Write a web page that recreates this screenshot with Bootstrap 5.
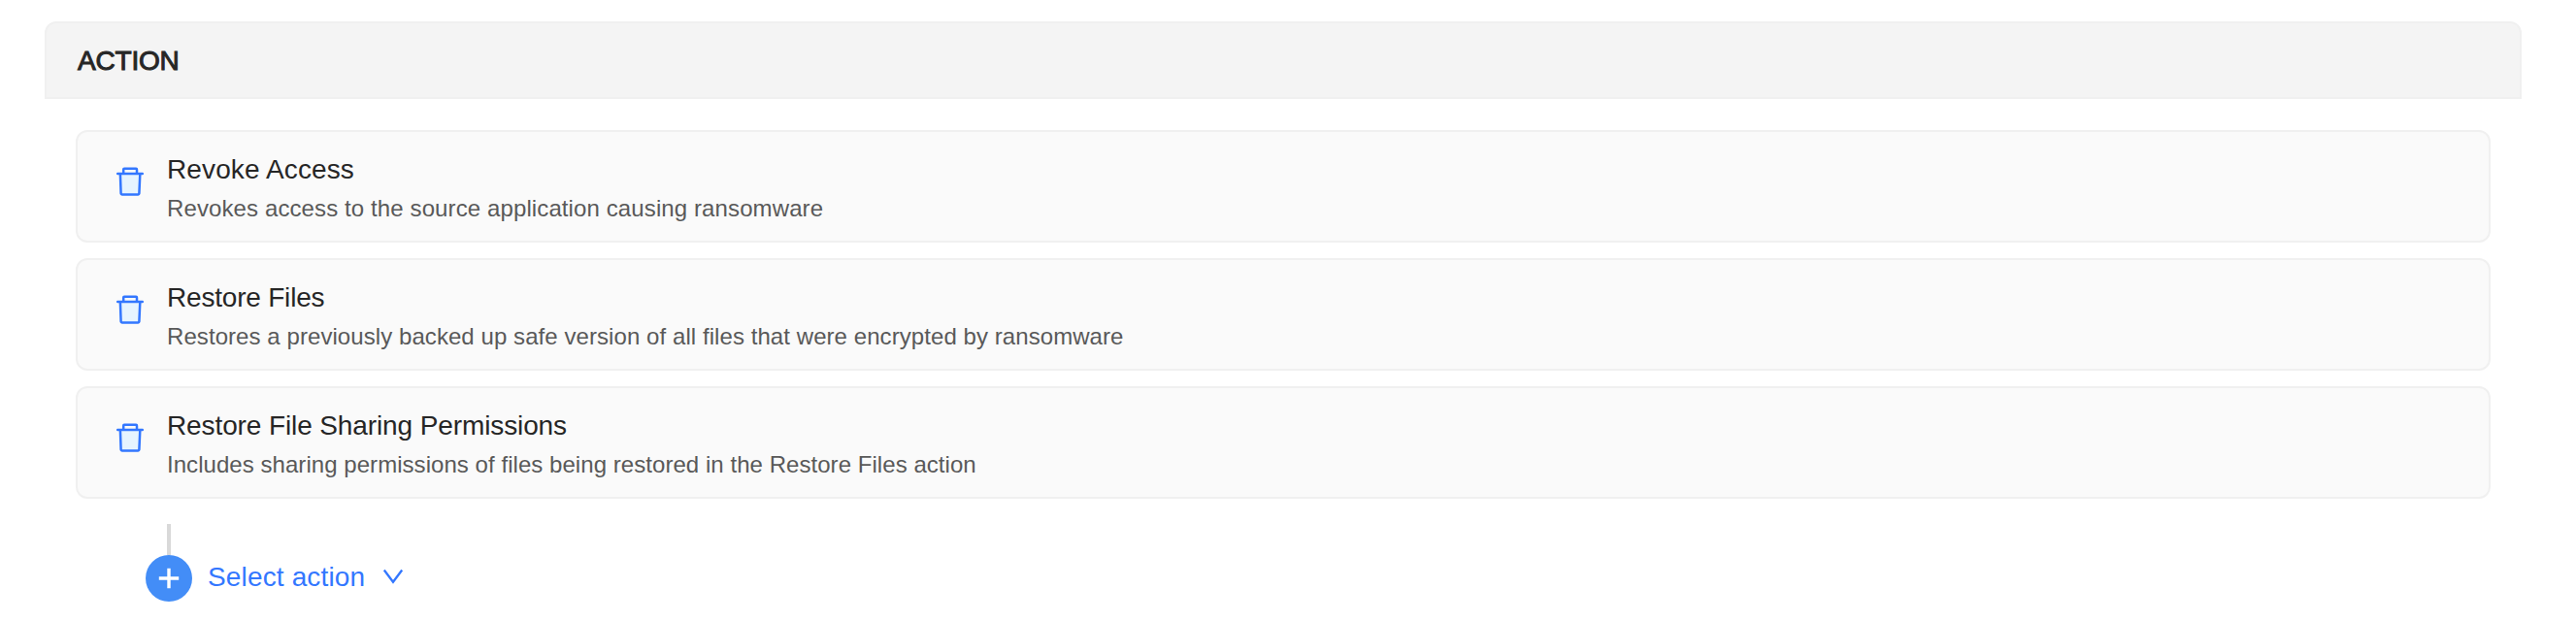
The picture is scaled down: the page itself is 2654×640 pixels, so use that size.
<!DOCTYPE html>
<html lang="en">
<head>
  <meta charset="utf-8">
  <title>Policy Actions</title>
  <link rel="stylesheet" href="https://cdn.jsdelivr.net/npm/bootstrap@5.3.0/dist/css/bootstrap.min.css">
  <style>
    body {
      font-family: "Liberation Sans", Arial, sans-serif;
      color: #262626;
      font-size: 28px;
      line-height: 44px;
    }
    .action-panel { padding: 22px 56px 0 46px; }
    .action-header {
      height: 80px;
      padding: 2px 32px 0;
      background: #f4f4f4;
      border: 2px solid #f0f0f0;
      border-radius: 12px 12px 0 0;
    }
    .action-header h2 {
      font-size: 28px;
      line-height: 44px;
      font-weight: 400;
      letter-spacing: -0.2px;
      -webkit-text-stroke: 1px #262626;
    }
    .action-body { padding: 32px; }
    .action-list { gap: 16px; }
    .action-item {
      height: 116px;
      padding: 17px 38px 0;
      gap: 22px;
      background: #fafafa;
      border: 2px solid #f0f0f0;
      border-radius: 12px;
    }
    .btn-trash { margin-top: 17px; }
    .action-title { font-size: 28px; line-height: 44px; }
    .action-text { font-size: 24px; line-height: 36px; color: #595959; }
    .action-item:nth-child(1) .action-title { letter-spacing: 0.12px; }
    .action-item:nth-child(2) .action-title { letter-spacing: -0.2px; }
    .action-item:nth-child(3) .action-title { letter-spacing: -0.11px; }
    .action-item:nth-child(1) .action-text { letter-spacing: 0.11px; }
    .action-item:nth-child(2) .action-text { letter-spacing: 0.07px; }
    .action-item:nth-child(3) .action-text { letter-spacing: 0.05px; }
    .add-action { padding: 26px 0 0 72px; }
    .add-line { width: 4px; height: 32px; margin-left: 22px; background: #d9d9d9; }
    .add-circle { width: 48px; height: 48px; background: #438df7; }
    .btn-select {
      padding: 0 0 2px;
      margin-left: 16px;
      gap: 18px;
      font-size: 28px;
      line-height: 44px;
      letter-spacing: 0.15px;
      color: #3377ff;
    }
    .btn-select svg { margin-bottom: 2px; }
  </style>
  <script src="https://cdn.jsdelivr.net/npm/bootstrap@5.3.0/dist/js/bootstrap.bundle.min.js"></script>
</head>
<body class="bg-white overflow-hidden">
  <svg class="d-none">
    <symbol id="trash" viewBox="0 0 32 32">
      <path d="M6 9H26L25.4 30.5H7Z" fill="#e6f4ff"/>
      <path d="M3.2 9H28.8M9.2 8.6V4.7Q9.2 3.8 10.1 3.8H22.1Q23 3.8 23 4.7V8.6M5.9 9.4L6.6 29.4Q6.7 30.4 7.7 30.4H24.3Q25.3 30.4 25.4 29.4L26.3 9.4" fill="none" stroke="#3377ff" stroke-width="2.5" stroke-linecap="round"/>
    </symbol>
  </svg>

  <div class="action-panel">
    <div class="action-header d-flex align-items-center">
      <h2 class="mb-0">ACTION</h2>
    </div>
    <div class="action-body">
      <div class="action-list d-flex flex-column">
        <div class="action-item d-flex align-items-start">
          <button type="button" class="btn-trash btn p-0 border-0 d-flex" aria-label="Delete"><svg width="32" height="32"><use href="#trash"/></svg></button>
          <div>
            <div class="action-title">Revoke Access</div>
            <div class="action-text">Revokes access to the source application causing ransomware</div>
          </div>
        </div>
        <div class="action-item d-flex align-items-start">
          <button type="button" class="btn-trash btn p-0 border-0 d-flex" aria-label="Delete"><svg width="32" height="32"><use href="#trash"/></svg></button>
          <div>
            <div class="action-title">Restore Files</div>
            <div class="action-text">Restores a previously backed up safe version of all files that were encrypted by ransomware</div>
          </div>
        </div>
        <div class="action-item d-flex align-items-start">
          <button type="button" class="btn-trash btn p-0 border-0 d-flex" aria-label="Delete"><svg width="32" height="32"><use href="#trash"/></svg></button>
          <div>
            <div class="action-title">Restore File Sharing Permissions</div>
            <div class="action-text">Includes sharing permissions of files being restored in the Restore Files action</div>
          </div>
        </div>
      </div>

      <div class="add-action">
        <div class="add-line"></div>
        <div class="d-flex align-items-center">
          <div class="add-circle rounded-circle d-flex align-items-center justify-content-center">
            <svg width="22" height="22" viewBox="0 0 22 22"><path d="M.8 11H21.2M11 .8V21.2" stroke="#fff" stroke-width="3.4"/></svg>
          </div>
          <button type="button" class="btn-select btn border-0 d-flex align-items-center">
            <span>Select action</span>
            <svg width="22" height="16" viewBox="0 0 22 16"><path d="M1.8 1.5L11 13.8L20.2 1.5" fill="none" stroke="#3377ff" stroke-width="2.3"/></svg>
          </button>
        </div>
      </div>
    </div>
  </div>
</body>
</html>
